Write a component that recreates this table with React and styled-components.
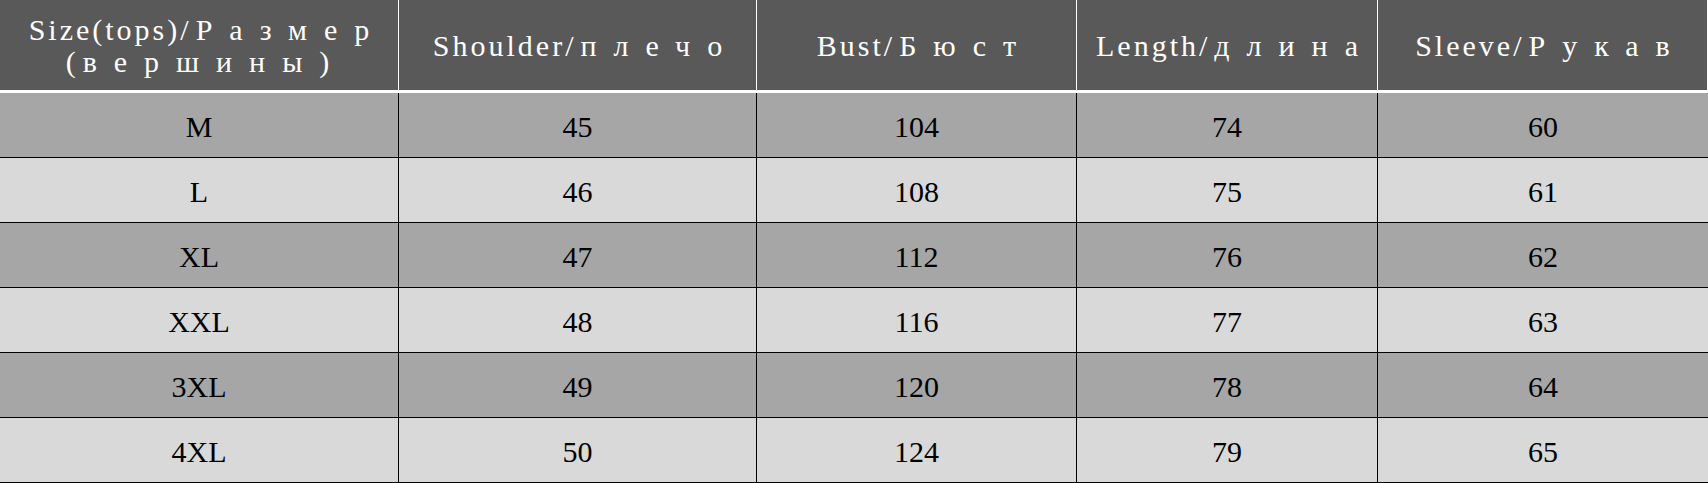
import styled, { createGlobalStyle } from "styled-components";

const GlobalStyle = createGlobalStyle`
  html, body {
    margin: 0;
    padding: 0;
    background: #ffffff;
  }
`;

const columns = [
  { latin: "Size(tops)/", cyr: "Размер", sub: "вершины" },
  { latin: "Shoulder/", cyr: "плечо" },
  { latin: "Bust/", cyr: "Бюст" },
  { latin: "Length/", cyr: "длина" },
  { latin: "Sleeve/", cyr: "Рукав" },
];

const rows = [
  ["M", "45", "104", "74", "60"],
  ["L", "46", "108", "75", "61"],
  ["XL", "47", "112", "76", "62"],
  ["XXL", "48", "116", "77", "63"],
  ["3XL", "49", "120", "78", "64"],
  ["4XL", "50", "124", "79", "65"],
];

export default function App() {
  return (
    <>
      <GlobalStyle />
      <Table>
        <HeaderRow>
          {columns.map((col, i) => (
            <HeadCell key={i} $first={i === 0}>
              <HeadLine>
                <Latin>{col.latin}</Latin>
                <Cyr>{col.cyr}</Cyr>
              </HeadLine>
              {col.sub && (
                <HeadLine>
                  <Latin>(</Latin>
                  <Cyr>{col.sub}</Cyr>
                  <Latin>)</Latin>
                </HeadLine>
              )}
            </HeadCell>
          ))}
        </HeaderRow>
        {rows.map((row, r) => (
          <BodyRow key={r} $dark={r % 2 === 0}>
            {row.map((val, c) => (
              <Cell key={c} $first={c === 0}>
                {val}
              </Cell>
            ))}
          </BodyRow>
        ))}
      </Table>
    </>
  );
}

const Table = styled.div`
  width: 1708px;
  display: flex;
  flex-direction: column;
  font-family: "Liberation Serif", "DejaVu Serif", serif;
`;

const grid = `
  display: grid;
  grid-template-columns: 398px 358px 320px 301px 331px;
`;

const HeaderRow = styled.div`
  ${grid}
  height: 90px;
  background: #595959;
  border-bottom: 3px solid #ffffff;
  box-sizing: content-box;
`;

const HeadCell = styled.div`
  display: flex;
  flex-direction: column;
  justify-content: center;
  align-items: center;
  border-left: ${(p) => (p.$first ? "none" : "1px solid #ffffff")};
  color: #ffffff;
  font-size: 30px;
  line-height: 32px;
  padding-top: 2px;
  &:last-child {
    border-right: 1px solid #ffffff;
  }
`;

const HeadLine = styled.div`
  white-space: nowrap;
`;

const Latin = styled.span`
  letter-spacing: 3px;
`;

const Cyr = styled.span`
  letter-spacing: 17px;
  margin-left: 4px;
  &:last-child {
    margin-right: -17px;
  }
`;

const BodyRow = styled.div`
  ${grid}
  height: 64px;
  background: ${(p) => (p.$dark ? "#a6a6a6" : "#d9d9d9")};
  border-bottom: 1px solid #000000;
  box-sizing: content-box;
`;

const Cell = styled.div`
  display: flex;
  align-items: center;
  justify-content: center;
  border-left: ${(p) => (p.$first ? "none" : "1px solid #000000")};
  color: #000000;
  font-size: 30px;
  padding-top: 4px;
`;
